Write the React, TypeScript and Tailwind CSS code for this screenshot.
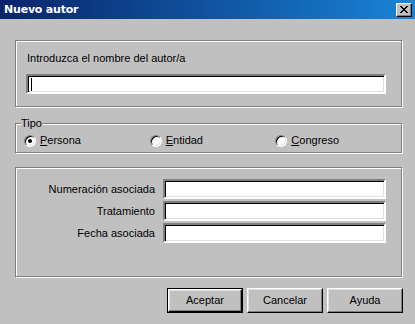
import React from "react";

const sunken =
  "border-2 border-t-[#808080] border-l-[#808080] border-b-white border-r-white bg-white shadow-[inset_1px_1px_0_#000,inset_-1px_-1px_0_#dfdfdf]";

const etched =
  "border border-[#808080] shadow-[inset_1px_1px_0_#fff,1px_1px_0_#fff]";

const Field = ({ className = "" }: { className?: string }) => (
  <div className={`${sunken} h-[20px] ${className}`} />
);

const Radio = ({ checked, accel, rest }: { checked?: boolean; accel: string; rest: string }) => (
  <div className="flex items-center w-[126px]">
    <span className="relative w-[12px] h-[12px] rounded-full bg-white border border-t-[#808080] border-l-[#808080] border-b-white border-r-white shadow-[inset_1px_1px_0_#000,inset_-1px_-1px_0_#dfdfdf] flex items-center justify-center">
      {checked && <span className="w-[4px] h-[4px] rounded-full bg-black" />}
    </span>
    <span className="ml-[4px]">
      <span className="underline underline-offset-1">{accel}</span>
      {rest}
    </span>
  </div>
);

const Button = ({ label, isDefault }: { label: string; isDefault?: boolean }) => (
  <div className={`w-[76px] h-[25px] ${isDefault ? "border border-black" : ""}`}>
    <div className="w-full h-full border border-t-white border-l-white border-b-black border-r-black shadow-[inset_-1px_-1px_0_#808080,inset_1px_1px_0_#dfdfdf] flex items-center justify-center">
      {label}
    </div>
  </div>
);

const App = () => {
  return (
    <div className="w-[415px] h-[324px] bg-[#c0c0c0] text-[11px] leading-[13px] text-black font-['Liberation_Sans',Arial,sans-serif] overflow-hidden">
      <div className="h-[19px] flex items-center justify-between pl-[4px] pr-[3px] bg-gradient-to-r from-[#0a246a] to-[#1a84d8]">
        <span className="text-white font-bold text-[11px] font-['DejaVu_Sans',Tahoma,sans-serif] tracking-[-0.2px]">
          Nuevo autor
        </span>
        <div className="w-[16px] h-[14px] bg-[#c0c0c0] border border-t-white border-l-white border-b-black border-r-black shadow-[inset_-1px_-1px_0_#808080] flex items-center justify-center">
          <svg width="8" height="7" viewBox="0 0 8 7">
            <path d="M0 0h2v1h1v1h2V1h1V0h2v1H7v1H6v1H5v1h1v1h1v1h1v1H6V6H5V5H3v1H2v1H0V6h1V5h1V4h1V3H2V2H1V1H0z" fill="#000" />
          </svg>
        </div>
      </div>

      <div className="pl-[15px] pt-[21px]">
        <div className={`${etched} w-[387px] h-[67px] pl-[10px] pt-[11px]`}>
          <div className="pl-[1px]">Introduzca el nombre del autor/a</div>
          <div className={`${sunken} h-[20px] w-[360px] mt-[9px] flex items-center pl-[3px]`}>
            <span className="w-px h-[13px] bg-black" />
          </div>
        </div>

        <div className={`${etched} relative w-[387px] h-[30px] mt-[16px] pl-[8px] pt-[10px] flex items-start`}>
          <span className="absolute left-[5px] top-[-7px] bg-[#c0c0c0] pr-[1px]">Tipo</span>
          <Radio checked accel="P" rest="ersona" />
          <Radio accel="E" rest="ntidad" />
          <Radio accel="C" rest="ongreso" />
        </div>

        <div className={`${etched} w-[387px] h-[110px] mt-[14px] pt-[11px] flex flex-col gap-[2px]`}>
          {["Numeración asociada", "Tratamiento", "Fecha asociada"].map((l) => (
            <div key={l} className="flex items-center">
              <span className="w-[139px] text-right">{l}</span>
              <Field className="w-[223px] ml-[8px]" />
            </div>
          ))}
        </div>

        <div className="flex gap-[4px] ml-[152px] mt-[11px]">
          <Button label="Aceptar" isDefault />
          <Button label="Cancelar" />
          <Button label="Ayuda" />
        </div>
      </div>
    </div>
  );
};

export default App;
